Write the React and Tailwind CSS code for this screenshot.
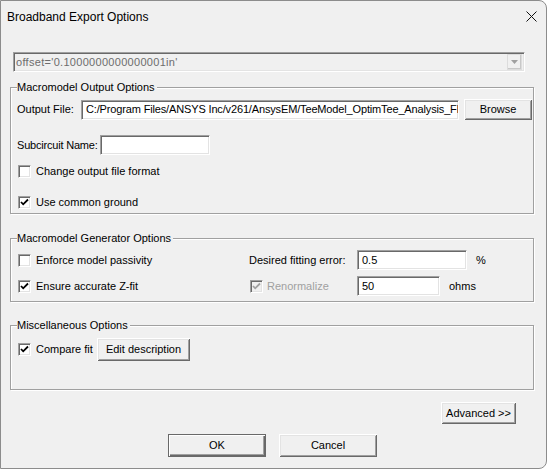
import React from "react";

const sunken =
  "border border-t-[#a0a0a0] border-l-[#a0a0a0] border-b-white border-r-white shadow-[inset_1px_1px_0_#696969,inset_-1px_-1px_0_#e3e3e3]";
const raised =
  "shadow-[inset_1px_1px_0_#ffffff,inset_-1px_-1px_0_#696969,inset_2px_2px_0_#e3e3e3,inset_-2px_-2px_0_#a0a0a0]";

function Check({ checked, disabled }) {
  return (
    <div
      className={`w-[13px] h-[13px] shrink-0 flex items-center justify-center ${
        disabled ? "bg-[#f0f0f0]" : "bg-white"
      } ${sunken}`}
    >
      {checked && (
        <svg width="9" height="9" viewBox="0 0 9 9">
          <path
            d="M1 4 L3.2 6.3 L8 1.5"
            fill="none"
            stroke={disabled ? "#a0a0a0" : "#000"}
            strokeWidth="1.8"
          />
        </svg>
      )}
    </div>
  );
}

function Button({ children, className = "", def }) {
  return (
    <div
      className={`flex items-center justify-center bg-[#f0f0f0] whitespace-nowrap ${
        def
          ? "border border-[#696969] shadow-[inset_1px_1px_0_#ffffff,inset_-1px_-1px_0_#696969,inset_-2px_-2px_0_#a0a0a0]"
          : raised
      } ${className}`}
    >
      {children}
    </div>
  );
}

function Input({ value = "", className = "" }) {
  return (
    <div className={`bg-white flex items-center pl-[4px] shrink-0 ${sunken} ${className}`}>
      {value}
    </div>
  );
}

function Group({ label, className = "", children }) {
  return (
    <div
      className={`relative ml-[9px] w-[524px] border border-[#a0a0a0] shadow-[inset_1px_1px_0_#ffffff,1px_1px_0_#ffffff] ${className}`}
    >
      <span className="absolute left-[6px] top-[-8px] bg-[#f0f0f0] pr-[2px] leading-[14px] whitespace-nowrap">
        {label}
      </span>
      {children}
    </div>
  );
}

export default function App() {
  return (
    <div className="w-[547px] h-[469px] bg-[#f0f0f0] border border-[#8c8c8c] rounded-r-[8px] flex flex-col text-[11px] text-black font-['Liberation_Sans',Arial,sans-serif] overflow-hidden">
      {/* Title bar */}
      <div className="h-[31px] flex items-center justify-between pl-[6px] pr-[9px]">
        <span className="text-[12px]">Broadband Export Options</span>
        <svg width="11" height="11" viewBox="0 0 11 11">
          <path d="M0.5 0.5 L10.5 10.5 M10.5 0.5 L0.5 10.5" stroke="#111" strokeWidth="1" />
        </svg>
      </div>

      {/* Combo */}
      <div
        className={`mt-[20px] ml-[12px] w-[512px] h-[20px] flex items-center justify-between bg-[#f0f0f0] ${sunken}`}
      >
        <span className="pl-[2px] text-[11px] tracking-[0.3px] text-[#6d6d6d] whitespace-nowrap">
          offset='0.1000000000000001in'
        </span>
        <div className="w-[15px] h-[16px] mr-[2px] flex items-center justify-center bg-[#f0f0f0] border border-[#dcdcdc] shadow-[inset_-1px_-1px_0_#c8c8c8]">
          <svg width="7" height="4" viewBox="0 0 7 4">
            <path d="M0 0 L7 0 L3.5 4 Z" fill="#a0a0a0" />
          </svg>
        </div>
      </div>

      {/* Group 1 */}
      <Group label="Macromodel Output Options" className="mt-[15px] h-[127px]">
        <div className="mt-[11px] h-[21px] flex items-center pl-[6px]">
          <span className="w-[64px] shrink-0 whitespace-nowrap">Output File:</span>
          <Input
            value="C:/Program Files/ANSYS Inc/v261/AnsysEM/TeeModel_OptimTee_Analysis_Fl"
            className="w-[378px] h-[20px] overflow-hidden whitespace-nowrap tracking-[-0.15px]"
          />
          <Button className="ml-[5px] w-[68px] h-[21px]">Browse</Button>
        </div>
        <div className="mt-[15px] h-[20px] flex items-center pl-[6px]">
          <span className="w-[83px] shrink-0 whitespace-nowrap tracking-[-0.2px]">Subcircuit Name:</span>
          <Input className="w-[110px] h-[20px]" />
        </div>
        <div className="mt-[10px] h-[13px] flex items-center pl-[7px]">
          <Check />
          <span className="ml-[5px] whitespace-nowrap">Change output file format</span>
        </div>
        <div className="mt-[18px] h-[13px] flex items-center pl-[7px]">
          <Check checked />
          <span className="ml-[5px] whitespace-nowrap">Use common ground</span>
        </div>
      </Group>

      {/* Group 2 */}
      <Group label="Macromodel Generator Options" className="mt-[24px] h-[64px]">
        <div className="mt-[11px] h-[20px] flex items-center pl-[7px]">
          <div className="w-[231px] shrink-0 flex items-center">
            <Check />
            <span className="ml-[5px] whitespace-nowrap">Enforce model passivity</span>
          </div>
          <span className="w-[108px] shrink-0 whitespace-nowrap">Desired fitting error:</span>
          <Input value="0.5" className="w-[110px] h-[20px]" />
          <span className="ml-[9px]">%</span>
        </div>
        <div className="mt-[6px] h-[20px] flex items-center pl-[7px]">
          <div className="w-[232px] shrink-0 flex items-center">
            <Check checked />
            <span className="ml-[5px] whitespace-nowrap">Ensure accurate Z-fit</span>
          </div>
          <div className="w-[107px] shrink-0 flex items-center">
            <Check checked disabled />
            <span className="ml-[4px] text-[#a0a0a0] whitespace-nowrap">Renormalize</span>
          </div>
          <Input value="50" className="w-[83px] h-[20px]" />
          <span className="ml-[9px]">ohms</span>
        </div>
      </Group>

      {/* Group 3 */}
      <Group label="Miscellaneous Options" className="mt-[23px] h-[65px]">
        <div className="mt-[12px] h-[23px] flex items-center pl-[7px]">
          <Check checked />
          <span className="ml-[5px] w-[61px] shrink-0 whitespace-nowrap">Compare fit</span>
          <Button className="w-[93px] h-[23px]">Edit description</Button>
        </div>
      </Group>

      {/* Advanced */}
      <div className="mt-[12px] ml-[440px]">
        <Button className="w-[75px] h-[22px]">Advanced &gt;&gt;</Button>
      </div>

      {/* OK / Cancel */}
      <div className="mt-[10px] ml-[167px] flex">
        <Button def className="w-[98px] h-[23px]">OK</Button>
        <Button className="ml-[13px] w-[98px] h-[23px]">Cancel</Button>
      </div>
    </div>
  );
}
